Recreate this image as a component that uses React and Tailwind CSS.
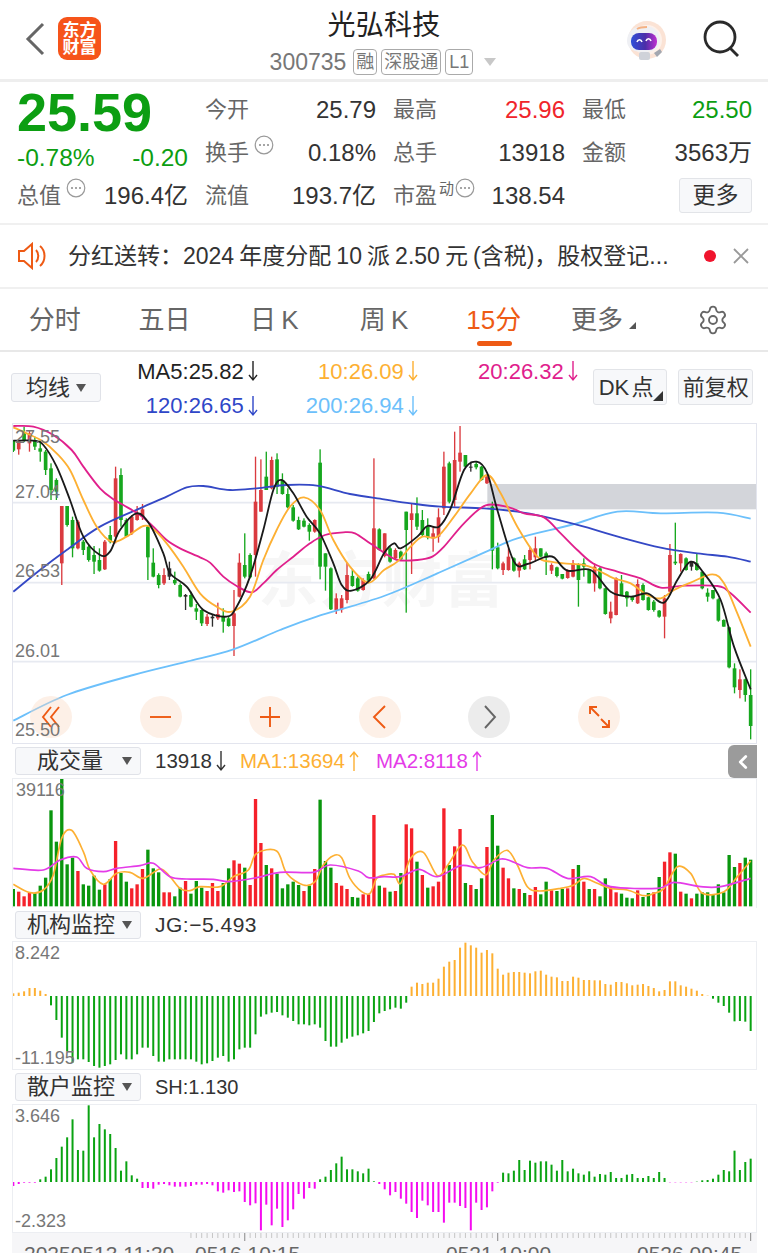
import React from 'react';
import { ChevronLeft, Settings } from 'lucide-react';

// 所有图表数据的坐标都按 3 倍像素记录,svg 的 viewBox 同样用 3 倍
const FONT = '[font-family:"Liberation_Sans","Noto_Sans_CJK_SC",sans-serif]';

// ─── 数据 ─────────────────────────────────────────────────────────────────────
const CANDLES = [
  ['g',60,62,92,96],['r',60,60,88,104],['g',20,40,62,66],['r',30,40,70,95],['g',50,60,80,90],['g',60,85,95,125],['g',90,95,150,165],['g',130,145,210,240],['g',175,180,215,240],['r',258,258,430,495],
  ['g',258,258,315,320],['g',290,300,385,412],['r',300,305,385,388],['g',360,365,390,405],['g',375,380,420,425],['g',378,405,425,462],['g',385,420,452,455],['r',360,365,448,450],['g',318,345,365,370],['r',140,175,350,370],
  ['g',145,165,300,320],['g',295,300,350,350],['r',285,290,340,345],['r',258,280,300,302],['r',252,268,290,300],['g',316,320,412,480],['g',385,428,470,472],['g',460,465,495,505],['r',445,465,490,495],['k',425,445,470,480],
  ['g',455,480,490,495],['g',490,495,530,532],['k',522,525,530,570],['g',515,525,560,562],['g',552,565,575,600],['g',568,570,610,618],['r',582,590,612,618],['k',582,590,595,620],['r',548,582,595,600],['g',565,590,605,638],
  ['g',590,595,618,620],['r',510,580,618,708],['r',400,428,530,532],['g',340,435,470,475],['g',400,405,472,475],['r',110,245,405,470],['r',118,210,275,275],['g',95,170,210,210],['r',110,120,205,208],['g',100,118,200,222],
  ['g',160,180,222,224],['g',205,222,262,265],['g',255,262,302,305],['g',290,300,328,330],['g',295,302,320,322],['g',310,315,335,362],['r',298,300,335,338],['g',88,128,440,478],['g',400,400,440,512],['g',442,445,568,570],
  ['r',520,535,570,582],['r',525,535,568,578],['r',428,465,540,550],['g',450,468,498,500],['g',470,475,512,515],['r',475,480,510,512],['g',455,462,482,490],['r',115,325,475,478],['g',325,328,390,392],['r',340,340,408,412],
  ['g',380,385,425,428],['r',385,390,415,420],['g',392,395,418,420],['g',275,275,330,578],['r',250,280,300,462],['g',232,280,320,330],['g',270,300,345,350],['g',295,320,352,358],['r',320,340,355,395],['r',265,292,350,368],
  ['r',95,140,265,285],['g',125,130,245,250],['r',35,120,240,260],['r',18,98,125,155],['g',105,105,140,142],['k',125,140,142,155],['g',125,132,142,148],['g',138,140,180,182],['r',165,170,190,192],['g',245,260,392,448],
  ['g',368,382,445,448],['r',425,430,450,465],['r',385,410,450,452],['g',412,415,452,455],['r',425,430,452,472],['g',405,418,448,450],['r',380,390,420,448],['r',350,385,412,425],['g',385,385,410,412],['g',395,400,412,465],
  ['r',430,435,452,462],['g',440,442,468,472],['g',462,462,476,478],['r',448,452,474,476],['r',420,430,470,472],['g',430,432,480,560],['g',415,430,440,470],['g',448,450,490,490],['r',430,440,490,515],['g',440,445,505,508],
  ['g',503,505,582,584],['r',545,575,595,610],['r',472,475,585,586],['g',465,490,525,526],['g',513,515,535,560],['g',530,530,540,545],['r',478,492,550,552],['g',490,495,540,542],['g',530,532,570,572],['g',540,545,570,575],
  ['g',570,572,590,593],['r',525,535,590,655],['r',372,405,515,516],['g',308,425,430,435],['r',400,402,430,455],['g',412,415,450,452],['k',425,425,440,452],['g',400,430,450,452],['g',455,455,505,508],['g',505,518,530,545],
  ['g',510,510,535,538],['g',535,538,602,605],['g',598,600,620,620],['g',620,622,742,745],['g',730,745,802,820],['r',748,778,810,835],['g',776,778,825,845],['g',748,825,918,958],
];

const MA20 = [40,18,100,20,160,45,215,90,250,140,300,205,340,238,370,255,420,285,460,320,500,360,540,385,600,412,630,428,670,470,710,498,755,517,790,490,830,450,880,410,930,370,975,345,1030,337,1065,340,1110,370,1152,398,1192,420,1252,420,1297,410,1332,380,1392,310,1457,256,1527,262,1572,280,1632,292,1682,340,1732,390,1782,432,1852,455,1922,475,1982,503,2052,497,2152,498,2192,520,2252,578];
const MA10 = [40,22,80,40,130,65,170,100,210,150,250,240,290,320,335,365,380,350,430,318,460,328,500,370,550,440,600,520,650,560,695,575,750,530,790,420,830,330,870,260,912,232,960,270,1000,360,1050,440,1105,488,1152,450,1192,425,1232,380,1267,350,1312,350,1362,290,1412,220,1462,165,1502,220,1552,320,1612,410,1652,425,1692,430,1752,435,1792,450,1842,475,1892,490,1942,525,1982,535,2022,510,2072,488,2137,463,2172,490,2212,580,2252,680];
const MA5 = [40,62,100,62,130,75,170,140,210,240,250,350,300,405,330,395,360,330,410,280,450,315,490,400,510,460,560,500,610,570,680,590,710,560,750,470,790,330,820,210,845,180,880,220,920,290,960,340,1000,430,1025,495,1055,512,1110,480,1152,400,1182,370,1202,385,1252,350,1282,318,1317,320,1352,265,1392,150,1430,125,1462,160,1492,270,1542,425,1582,432,1632,412,1662,412,1702,452,1772,450,1832,515,1892,530,1942,520,1992,548,2032,480,2072,425,2112,460,2162,540,2202,680,2252,808];
const MA120 = [40,515,120,450,200,390,300,320,420,265,500,230,560,202,610,198,690,210,770,205,860,195,950,197,1050,222,1152,238,1232,250,1322,260,1452,265,1552,275,1632,290,1752,320,1872,355,1982,383,2092,400,2182,410,2252,425];
const MA200 = [40,902,200,825,400,765,560,725,700,688,840,630,950,590,1152,528,1312,460,1452,398,1552,355,1712,315,1852,275,1982,280,2152,278,2252,296];

const VOLUME = [
  ['g',52],['r',44],['r',30],['r',40],['g',40],['g',62],['g',86],['g',288],['g',194],['g',384],['g',126],['g',146],['r',106],['g',66],['g',62],['g',92],['g',50],['r',66],['g',82],['r',196],
  ['g',100],['g',74],['r',54],['r',66],['r',112],['g',170],['g',114],['g',102],['r',42],['r',42],['g',30],['g',56],['r',76],['g',38],['g',76],['g',56],['r',46],['r',70],['r',46],['g',70],
  ['g',114],['r',138],['r',128],['g',116],['r',64],['r',322],['r',190],['g',124],['r',114],['g',98],['g',54],['g',66],['g',74],['g',64],['r',46],['g',62],['r',112],['g',320],['g',136],['g',116],
  ['r',70],['r',62],['r',52],['g',28],['g',26],['r',36],['r',36],['r',274],['g',62],['r',56],['g',44],['r',46],['g',100],['r',246],['r',234],['g',134],['r',94],['g',56],['r',60],['r',74],
  ['r',294],['g',124],['r',180],['r',232],['g',70],['r',64],['g',52],['g',84],['r',178],['g',274],['g',182],['r',116],['r',84],['g',54],['r',52],['g',40],['r',34],['r',58],['g',36],['g',74],
  ['r',48],['g',46],['g',52],['r',54],['r',112],['g',124],['r',74],['g',52],['r',52],['g',30],['g',84],['r',58],['r',42],['g',38],['g',26],['g',24],['r',48],['g',28],['g',40],['r',42],
  ['g',88],['r',134],['r',162],['g',158],['r',44],['g',38],['r',24],['g',38],['g',42],['g',42],['g',34],['g',66],['g',42],['g',154],['g',118],['r',130],['g',146],['g',140],
];
const VOL_MA1 = [40,418,90,443,130,435,160,390,185,280,215,256,250,320,270,375,310,418,350,385,390,382,430,400,480,372,510,395,540,430,570,437,600,425,660,425,700,395,745,375,770,325,830,318,860,385,910,420,945,410,970,360,1000,332,1025,338,1050,400,1085,440,1110,445,1130,400,1152,390,1182,388,1202,415,1232,340,1270,322,1312,392,1342,362,1387,300,1417,350,1457,390,1482,345,1522,316,1552,360,1582,425,1617,438,1682,430,1722,420,1752,400,1792,415,1832,430,1882,435,1932,452,1962,445,1992,430,2032,365,2072,385,2107,445,2172,440,2212,395,2252,348];
const VOL_MA2 = [40,370,130,375,180,345,230,336,260,370,310,380,350,370,420,362,460,355,510,395,560,402,640,403,690,410,770,398,840,382,940,382,990,360,1075,378,1105,398,1152,395,1202,395,1257,373,1312,395,1382,362,1442,368,1502,342,1537,350,1582,368,1642,370,1702,400,1772,395,1832,425,1972,430,2022,412,2102,425,2162,425,2252,400];

const JG = [8,10,14,24,24,16,6,-28,-72,-125,-165,-200,-190,-190,-198,-210,-215,-210,-205,-192,-175,-190,-190,-175,-155,-155,-180,-197,-197,-190,-190,-190,-190,-190,-197,-205,-202,-195,-185,-180,-197,-190,-160,-155,-155,-115,-62,-55,-50,-48,-58,-65,-75,-85,-85,-88,-85,-95,-135,-152,-152,-140,-128,-122,-118,-112,-105,-78,-52,-45,-40,-35,-38,-20,28,40,36,40,40,52,88,103,108,145,160,152,145,130,138,128,82,64,70,72,72,70,68,74,76,64,58,56,45,45,58,55,48,48,47,47,36,34,42,42,38,32,34,36,30,24,14,18,44,44,32,28,22,16,6,1,-8,-20,-30,-50,-76,-75,-77,-105];
const SH = [-12,-6,-2,-2,-2,8,16,38,72,106,134,188,96,94,230,134,174,158,144,102,34,62,20,10,-18,-18,-20,-8,-6,-10,-14,-14,-14,-12,-8,-8,-6,-10,-28,-32,-25,-30,-28,-60,-70,-64,-145,-68,-130,-80,-135,-115,-82,-36,-50,-18,-20,8,16,36,56,76,38,38,32,26,40,2,-6,-22,-40,-30,-50,-65,-90,-108,-56,-70,-90,-90,-122,-62,-62,-72,-78,-145,-62,-84,-76,-28,-2,28,26,34,66,36,64,58,62,62,52,34,66,32,40,26,22,32,16,24,22,30,12,12,22,24,12,12,18,12,30,12,-1,-1,-1,-1,-1,1,5,6,10,22,36,32,94,36,60,70];

const TAB_ITEMS = ['分时', '五日', '日 K', '周 K', '15分', '更多'];
const STATS = [
  [['今开', '25.79', 'text-[#333]'], ['最高', '25.96', 'text-[#f0252b]'], ['最低', '25.50', 'text-[#0c9e12]']],
  [['换手', '0.18%', 'text-[#333]', true], ['总手', '13918', 'text-[#333]'], ['金额', '3563万', 'text-[#333]']],
];

// x 坐标:138 根柱子从 40 到 2252 (3 倍坐标)
const barX = (i, n) => 40 + (i * (2252 - 40)) / (n - 1);

// Catmull-Rom 转贝塞尔,把折线点变平滑
const smoothPath = (flat, dy = 0) => {
  const p = [];
  for (let i = 0; i < flat.length; i += 2) p.push([flat[i], flat[i + 1] + dy]);
  let d = `M${p[0][0]} ${p[0][1]}`;
  for (let i = 0; i < p.length - 1; i++) {
    const a = p[i - 1] || p[i];
    const b = p[i];
    const c = p[i + 1];
    const e = p[i + 2] || c;
    d += `C${b[0] + (c[0] - a[0]) / 6} ${b[1] + (c[1] - a[1]) / 6} ${c[0] - (e[0] - b[0]) / 6} ${c[1] - (e[1] - b[1]) / 6} ${c[0]} ${c[1]}`;
  }
  return d;
};

// ─── 小图标 ───────────────────────────────────────────────────────────────────
const InfoDots = ({ className = '' }) => (
  <svg viewBox="0 0 20 20" className={`w-5 h-5 shrink-0 ${className}`}>
    <circle cx="10" cy="10" r="8.8" fill="none" stroke="#999" strokeWidth="1.2" />
    <circle cx="6" cy="10" r="1" fill="#888" />
    <circle cx="10" cy="10" r="1" fill="#888" />
    <circle cx="14" cy="10" r="1" fill="#888" />
  </svg>
);

const Arrow = ({ color, up = false }) => (
  <svg viewBox="0 0 12 22" className="w-3 h-[22px] ml-[3px] mr-[2px] shrink-0" fill="none" stroke={color} strokeWidth="1.4">
    {up ? <path d="M6 21V2M2 7l4-5 4 5" /> : <path d="M6 1v19M2 15l4 5 4-5" />}
  </svg>
);

const Caret = () => (
  <svg viewBox="0 0 10 8" className="w-[10px] h-2 shrink-0">
    <path d="M0 0h10L5 8z" fill="#555" />
  </svg>
);

const Select = ({ label, className = '' }) => (
  <div className={`flex items-center justify-between bg-[#f7f8fa] border border-[#e0e2e8] rounded-[3px] text-[22px] text-[#333] ${className}`}>
    <span className="leading-none">{label}</span>
    <Caret />
  </div>
);

const RoundBtn = ({ d, gray = false }) => (
  <div className={`w-[42px] h-[42px] rounded-full ${gray ? 'bg-[#ececec]' : 'bg-[#fbd9c4]/40'}`}>
    <svg viewBox="0 0 42 42" className="w-full h-full" fill="none" stroke={gray ? '#666' : '#ee5a14'} strokeWidth="1.9">
      <path d={d} />
    </svg>
  </div>
);

const Robot = () => (
  <svg viewBox="0 0 42 42" className="w-[42px] h-[42px]">
    <defs>
      <linearGradient id="visor" x1="0" x2="1" y1="0" y2="0">
        <stop offset="0" stopColor="#2f4fd8" />
        <stop offset="0.55" stopColor="#4b2ea8" />
        <stop offset="1" stopColor="#c02fd0" />
      </linearGradient>
    </defs>
    <circle cx="23" cy="21" r="19" fill="#fbe3d5" />
    <circle cx="23" cy="21" r="15" fill="#fdf1ea" />
    <path d="M3 22c0-9 7-15 17-15s16 6 16 14-6 12-16 12S3 30 3 22z" fill="#eff0f4" />
    <path d="M13 10c3-2 7-2 10-2" stroke="#f5b183" strokeWidth="2" fill="none" />
    <rect x="7" y="14" width="26" height="17" rx="8" fill="url(#visor)" />
    <path d="M13 23c1-3 4-3 5 0M22 22c1-3 4-3 5 0" stroke="#fff" strokeWidth="1.6" fill="none" />
    <rect x="15" y="33" width="11" height="8" rx="2" fill="#cfd2d9" />
    <path d="M30 34l6-4 2 3-5 5z" fill="#a3a7b0" />
  </svg>
);

// ─── 图表 ─────────────────────────────────────────────────────────────────────
const CANDLE_COLORS = { r: '#d93035', g: '#0aa312', k: '#222' };

const PriceChart = () => (
  <div className="relative mx-[12px] w-[745px] h-[321px] border border-[#e3e5ee] overflow-hidden">
    <div className={`absolute left-[245px] top-[128px] text-[60px] leading-none font-bold tracking-[2px] text-[#f6f6f6] whitespace-nowrap ${FONT}`}>东方财富</div>
    <svg viewBox="39 12 2229 957" className="absolute inset-0 w-full h-full" fill="none">
      {[248, 488, 725].map((y) => (
        <line key={y} x1="36" x2="2268" y1={y} y2={y} stroke="#e7eaf1" strokeWidth="5" />
      ))}
      <rect x="1462" y="192" width="806" height="76" fill="#d3d5da" />
      {CANDLES.map(([c, wt, bt, bb, wb], i) => {
        const x = barX(i, CANDLES.length);
        return (
          <g key={i} fill={CANDLE_COLORS[c]} opacity="0.95">
            <rect x={x - 2} y={wt} width="4" height={wb - wt} />
            <rect x={x - 5.5} y={bt} width="11" height={Math.max(bb - bt, 3)} />
          </g>
        );
      })}
      <path d={smoothPath(MA200)} stroke="#6cc0fb" strokeWidth="5.5" />
      <path d={smoothPath(MA120)} stroke="#3448c5" strokeWidth="5.5" />
      <path d={smoothPath(MA20)} stroke="#e0208c" strokeWidth="5.5" />
      <path d={smoothPath(MA10)} stroke="#fdb033" strokeWidth="5.5" />
      <path d={smoothPath(MA5)} stroke="#1a1a1a" strokeWidth="5.5" />
    </svg>
    <div className="absolute left-[17px] top-[272px] flex gap-[67.6px]">
      <RoundBtn d="M21 11l-8 10 8 10M29 11l-8 10 8 10" />
      <RoundBtn d="M10 21h21" />
      <RoundBtn d="M11 21h20M21 11v20" />
      <RoundBtn d="M26 10L15 21l11 11" />
      <RoundBtn gray d="M17 10l10 11-10 11" />
      <RoundBtn d="M12 18v-7h7M12 11l9 9M31 24v7h-7M31 31l-8-8" />
    </div>
    {[['27.55', 3], ['27.04', 58], ['26.53', 137], ['26.01', 217], ['25.50', 296]].map(([t, top]) => (
      <div key={t} className="absolute left-[2px] text-[18px] leading-[20px] text-[#777]" style={{ top }}>{t}</div>
    ))}
  </div>
);

const VolumeChart = () => (
  <div className="relative mx-[12px] w-[745px] h-[130px] border border-[#eceef2] border-b-0 overflow-hidden">
    <svg viewBox="39 3 2229 387" className="absolute inset-0 w-full h-full" fill="none">
      {VOLUME.map(([c, h], i) => (
        <rect key={i} x={barX(i, VOLUME.length) - 5} y={385 - h} width="10" height={h} fill={c === 'r' ? '#f5212a' : '#0a960e'} />
      ))}
      <path d={smoothPath(VOL_MA1, -99)} stroke="#fdb033" strokeWidth="5" />
      <path d={smoothPath(VOL_MA2, -99)} stroke="#e43be8" strokeWidth="5" />
    </svg>
    <div className="absolute left-[3px] top-[1px] text-[18px] leading-[20px] text-[#777]">39116</div>
  </div>
);

const IndicatorChart = ({ values, zero, up, down, top, bottom }) => (
  <div className="relative mx-[12px] w-[745px] h-[129px] border border-[#eceef2] overflow-hidden">
    <svg viewBox="39 3 2229 381" className="absolute inset-0 w-full h-full">
      {values.map((v, i) => (
        <rect
          key={i}
          x={barX(i, values.length) - 3}
          y={v > 0 ? zero - v : zero}
          width="6"
          height={Math.abs(v)}
          fill={v > 0 ? up : down}
        />
      ))}
    </svg>
    <div className="absolute left-[2px] top-[1px] text-[18px] leading-[20px] text-[#777]">{top}</div>
    <div className="absolute left-[2px] top-[106px] text-[18px] leading-[20px] text-[#777]">{bottom}</div>
  </div>
);

const TICKS = Array.from({ length: 105 }, (_, i) => i + 33);

const TimeAxis = () => (
  <div className="relative mx-[12px] w-[745px] h-[20px] bg-[#f6f6f8]">
    <svg viewBox="36 0 2235 60" className="absolute inset-0 w-full h-full">
      {TICKS.map((i) => {
        const long = i === 43 || i === 90 || i === 137;
        return <rect key={i} x={barX(i, 138) - 1.5} y="0" width="3" height={long ? 24 : 15} fill={long ? '#888' : '#c6c6c6'} />;
      })}
    </svg>
    {[['20250513 11:30', 12], ['0516 10:15', 183], ['0521 10:00', 434], ['0526 09:45', 625]].map(([t, left]) => (
      <div key={t} className="absolute top-[10px] text-[21px] leading-[22px] text-[#666] whitespace-nowrap" style={{ left }}>{t}</div>
    ))}
  </div>
);

// ─── 页面 ─────────────────────────────────────────────────────────────────────
const App = () => (
  <div className={`relative w-[768px] h-[1253px] overflow-hidden bg-white ${FONT}`}>
    {/* 顶栏 */}
    <header className="relative h-[82px] border-b-[3px] border-[#eeeeee]">
      <div className="absolute left-[24px] top-[22px] text-[#666]">
        <svg viewBox="0 0 22 34" className="w-[22px] h-[34px]" fill="none" stroke="currentColor" strokeWidth="3">
          <path d="M19 2L4 17l15 15" />
        </svg>
      </div>
      <div className="absolute left-[58px] top-[17px] w-[43px] h-[43px] rounded-[9px] bg-[#f6541a] text-white font-bold text-[17px] leading-[17px] text-center flex flex-col justify-center">
        <span>东方</span>
        <span>财富</span>
      </div>
      <div className="flex flex-col items-center pt-[9px]">
        <div className="text-[28px] leading-[34px] text-[#222] tracking-[0.2px]">光弘科技</div>
        <div className="mt-[6px] flex items-center gap-[4px] text-[#777] ml-[-2px]">
          <span className="text-[23px] leading-[26px] mr-[3px]">300735</span>
          <span className="border border-[#aaa] rounded-[4px] text-[18px] leading-[24px] px-[2px]">融</span>
          <span className="border border-[#aaa] rounded-[4px] text-[18px] leading-[24px] px-[2px]">深股通</span>
          <span className="border border-[#aaa] rounded-[4px] text-[18px] leading-[24px] px-[3px]">L1</span>
          <svg viewBox="0 0 12 8" className="w-3 h-2 ml-[7px]"><path d="M0 0h12L6 8z" fill="#c8c8c8" /></svg>
        </div>
      </div>
      <div className="absolute left-[624px] top-[19px]"><Robot /></div>
      <svg viewBox="0 0 38 38" className="absolute left-[703px] top-[20px] w-[38px] h-[38px]" fill="none" stroke="#2a2a2a" strokeWidth="2.8">
        <circle cx="17" cy="17" r="15" />
        <path d="M27 28l8 8" />
      </svg>
    </header>

    {/* 行情 */}
    <section className="h-[143px] border-b-2 border-[#f0f0f0] flex pl-[17px] pr-[16px] pt-[7px] gap-[16px]">
      <div className="w-[171px] shrink-0">
        <div className="text-[54px] leading-[48px] font-bold text-[#0c9e12] -mt-[1px]">25.59</div>
        <div className="flex justify-between text-[24.5px] leading-[26px] text-[#0c9e12] mt-[9px]">
          <span>-0.78%</span>
          <span>-0.20</span>
        </div>
        <div className="flex justify-between items-center mt-[8px] h-[34px]">
          <span className="flex items-start text-[22px] text-[#666] leading-[28px]">总值<InfoDots className="mt-[-4px] ml-[5px]" /></span>
          <span className="text-[24px] text-[#333]">196.4亿</span>
        </div>
      </div>
      <div className="flex-1 flex flex-col">
        {STATS.map((row, r) => (
          <div key={r} className="grid grid-cols-[172px_173px_171px] gap-x-[16px] h-[42.5px] items-center">
            {row.map(([label, value, color, info]) => (
              <div key={label} className="flex justify-between items-center">
                <span className="flex items-start text-[22px] text-[#666] leading-[28px] ml-[1px]">{label}{info && <InfoDots className="mt-[-4px] ml-[5px]" />}</span>
                <span className={`text-[24px] ${color}`}>{value}</span>
              </div>
            ))}
          </div>
        ))}
        <div className="grid grid-cols-[172px_173px_171px] gap-x-[16px] h-[43px] items-center">
          <div className="flex justify-between items-center">
            <span className="text-[22px] text-[#666] leading-[28px] ml-[1px]">流值</span>
            <span className="text-[24px] text-[#333]">193.7亿</span>
          </div>
          <div className="flex justify-between items-center">
            <span className="flex items-start text-[22px] text-[#666] leading-[28px] ml-[1px]">市盈<sup className="text-[15px] leading-[15px] mt-[-1px] ml-[2px] top-0">动</sup><InfoDots className="mt-[-4px] ml-[1px]" /></span>
            <span className="text-[24px] text-[#333]">138.54</span>
          </div>
          <div className="flex justify-end">
            <span className="w-[73px] h-[35px] bg-[#f7f8fa] border border-[#e2e4e8] rounded-[3px] text-[23px] text-[#333] flex items-center justify-center">更多</span>
          </div>
        </div>
      </div>
    </section>

    {/* 公告 */}
    <section className="h-[64px] border-b-2 border-[#f0f0f0] flex items-center pl-[18px] pr-[18px]">
      <svg viewBox="0 0 30 28" className="w-[30px] h-[28px] shrink-0" fill="none" stroke="#ee5a14" strokeWidth="2">
        <path d="M1 9h5l8-7v24l-8-7H1z" />
        <path d="M18 8c3 3 3 9 0 12M22 4c6 5 6 15 0 20" />
      </svg>
      <div className="ml-[20px] w-[600px] text-[23px] [word-spacing:-1.3px] text-[#333] whitespace-nowrap overflow-hidden">分红送转：2024 年度分配 10 派 2.50 元 (含税)，股权登记...</div>
      <span className="ml-[36px] w-[12px] h-[12px] rounded-full bg-[#f0142d] shrink-0" />
      <svg viewBox="0 0 16 16" className="ml-[17px] w-4 h-4 shrink-0" fill="none" stroke="#999" strokeWidth="1.8">
        <path d="M1 1l14 14M15 1L1 15" />
      </svg>
    </section>

    {/* 周期切换 */}
    <nav className="relative h-[63px] border-b-2 border-[#e8e8e8] grid grid-cols-7 items-center pt-[1px]">
      {TAB_ITEMS.map((t) => (
        <div key={t} className={`text-center text-[26px] [word-spacing:-2px] ${t === '15分' ? 'text-[#ee5a14]' : 'text-[#666]'}`}>
          {t}
          {t === '更多' && <span className="inline-block w-0 h-0 ml-[6px] border-l-[7px] border-l-transparent border-b-[7px] border-b-[#555]" />}
        </div>
      ))}
      <div className="flex justify-center text-[#666]"><Settings size={32} strokeWidth={1.4} /></div>
      <span className="absolute left-[477px] top-[52px] w-[35px] h-[5px] rounded-full bg-[#ee5a14]" />
    </nav>

    {/* 均线 */}
    <section className="h-[71px] flex pl-[11px] pr-[15px] pt-[17px]">
      <Select label="均线" className="w-[90px] h-[29px] mt-[4px] px-[14px]" />
      <div className="grid grid-cols-[160px_160px_160px] text-[22px] leading-[33px] w-[480px] -mt-[15px]">
        <div className="flex justify-end items-center text-[#222]">MA5:25.82<Arrow color="#222" /></div>
        <div className="flex justify-end items-center text-[#fdb033]">10:26.09<Arrow color="#fdb033" /></div>
        <div className="flex justify-end items-center text-[#e0208c]">20:26.32<Arrow color="#e0208c" /></div>
        <div className="flex justify-end items-center text-[#2f47c8]">120:26.65<Arrow color="#2f47c8" /></div>
        <div className="flex justify-end items-center text-[#6cc0fb]">200:26.94<Arrow color="#6cc0fb" /></div>
      </div>
      <div className="relative ml-[12px] w-[75px] h-[36px] bg-[#f7f8fa] border border-[#e2e4e8] rounded-[3px] text-[22px] [word-spacing:-4px] text-[#333] flex items-center pl-[5px] whitespace-nowrap">
        DK 点
        <span className="absolute right-[3px] bottom-[3px] w-0 h-0 border-l-[10px] border-l-transparent border-b-[10px] border-b-[#333]" />
      </div>
      <div className="ml-[11px] w-[75px] h-[36px] bg-[#f7f8fa] border border-[#e2e4e8] rounded-[3px] text-[22px] text-[#333] flex items-center justify-center">前复权</div>
    </section>

    <PriceChart />

    {/* 成交量 */}
    <section className="relative h-[34px] flex items-center pl-[15px] text-[20.5px]">
      <Select label="成交量" className="w-[126px] h-[28px] pl-[21px] pr-[8px]" />
      <div className="ml-[14px] flex items-center text-[#333]">13918<Arrow color="#333" /></div>
      <div className="ml-[11px] flex items-center text-[#fdb033]">MA1:13694<Arrow color="#fdb033" up /></div>
      <div className="ml-[14px] flex items-center text-[#e43be8]">MA2:8118<Arrow color="#e43be8" up /></div>
      <div className="absolute left-[728px] top-[1px] w-[29px] h-[33px] bg-[#9b9b9b] rounded-l-[6px] flex items-center justify-center text-white">
        <ChevronLeft size={22} strokeWidth={3} />
      </div>
    </section>
    <VolumeChart />

    {/* 机构监控 */}
    <section className="h-[33px] flex items-center pl-[15px]">
      <Select label="机构监控" className="w-[126px] h-[28px] pl-[11px] pr-[8px]" />
      <span className="ml-[14px] text-[21px] tracking-[0.5px] text-[#333]">JG:−5.493</span>
    </section>
    <IndicatorChart values={JG} zero={165} up="#fdb033" down="#0aa312" top="8.242" bottom="-11.195" />

    {/* 散户监控 */}
    <section className="h-[34px] flex items-center pl-[15px]">
      <Select label="散户监控" className="w-[126px] h-[28px] pl-[11px] pr-[8px]" />
      <span className="ml-[14px] text-[20px] text-[#333]">SH:1.130</span>
    </section>
    <IndicatorChart values={SH} zero={234} up="#0aa312" down="#f50cf0" top="3.646" bottom="-2.323" />

    <TimeAxis />
  </div>
);

export default App;
